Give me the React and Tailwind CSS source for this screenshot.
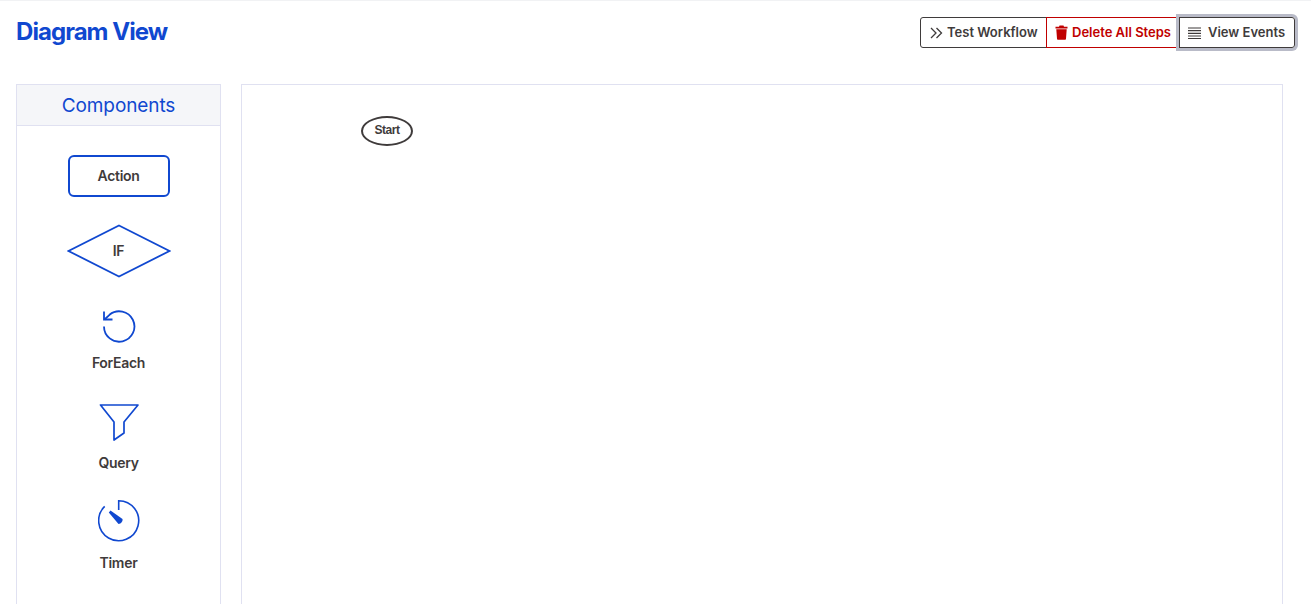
import React from "react";

const Label = ({ children, className = "" }) => (
  <span className={`text-[14px] font-semibold tracking-[-0.3px] leading-5 text-[#3f3b3b] ${className}`}>{children}</span>
);

export default function App() {
  return (
    <div className="h-[604px] overflow-hidden bg-white border-t border-[#f1f2f4] font-['Inter',sans-serif]">
      <div className="flex items-start justify-between pl-4 pr-4 pt-4 h-[83px]">
        <h1 className="text-[24px] leading-[30px] font-bold tracking-[-0.95px] text-[#1048d0]">Diagram View</h1>
        <div className="flex h-[31px]">
          <button className="flex items-center gap-1 w-[127px] pl-[9px] border border-[#3f3b3b] rounded-l-[3px] text-[13px] font-semibold text-[#3f3b3b]">
            <svg width="13" height="12" viewBox="0 0 13 12" fill="none" stroke="#3f3b3b" strokeWidth="1.3"><path d="M1 1 6 6l-5 5M6.500 1l5 5-5 5" /></svg>
            Test Workflow
          </button>
          <button className="flex items-center gap-[4px] w-[134px] -ml-px pl-[8px] border border-[#c00000] text-[13px] font-semibold text-[#c00000]">
            <svg width="13" height="15" viewBox="0 0 13 15" fill="#c00000"><path d="M4.500 0.500h4L9 1.800h3.500v1.600H.5V1.800H4zM1.300 4.200h10.400l-.7 9.600c0 .5-.5 1-1 1H3c-.5 0-1-.5-1-1z" /></svg>
            Delete All Steps
          </button>
          <button className="relative flex items-center gap-[7px] w-[116px] -ml-px pl-[8px] border border-[#3f3b3b] rounded-r-[3px] shadow-[0_0_0_3px_#b9bbc8] text-[13px] font-semibold text-[#3f3b3b]">
            <svg width="13" height="12" viewBox="0 0 13 12" fill="none" stroke="#3f3b3b" strokeWidth="1.2"><path d="M0 1h13M0 3.700h13M0 6.300h13M0 9h13M0 11.500h13" /></svg>
            View Events
          </button>
        </div>
      </div>
      <div className="flex gap-5 pl-4 pr-7">
        <aside className="w-[205px] h-[540px] shrink-0 border border-[#e0e1f1]">
          <div className="h-[41px] pt-[3px] flex items-center justify-center bg-[#f5f6f9] border-b border-[#e0e1f1] text-[19px] tracking-[-0.1px] text-[#1048d0]">Components</div>
          <div className="flex flex-col items-center pt-[29px]">
            <div className="w-[102px] h-[42px] flex items-center justify-center border-2 border-[#1048d0] rounded-[6px]"><Label>Action</Label></div>
            <div className="relative mt-[27px] w-[104px] h-[54px] flex items-center justify-center">
              <svg className="absolute inset-0" width="104" height="54" viewBox="0 0 104 54" fill="none" stroke="#1048d0" strokeWidth="1.8"><path d="M52 1.500 102.500 27 52 52.500 1.500 27z" /></svg>
              <Label className="relative">IF</Label>
            </div>
            <svg className="mt-[29px]" width="36" height="38" viewBox="0 0 36 38" fill="none" stroke="#1048d0" strokeWidth="1.8"><path d="M3 19.500a15.200 15.200 0 1 0 5.500-11.700L3.500 12.500" /><path d="M3 4.500v8h8.500" /></svg>
            <Label className="mt-2">ForEach</Label>
            <svg className="mt-[30px]" width="40" height="38" viewBox="0 0 40 38" fill="none" stroke="#1048d0" strokeWidth="1.700" strokeLinejoin="round"><path d="M1.500 2H39L25 19v11l-10 7V19z" /></svg>
            <Label className="mt-3">Query</Label>
            <svg className="mt-[26px]" width="42" height="44" viewBox="0 0 42 44" fill="none" stroke="#1048d0" strokeWidth="1.600"><path d="M20.700 11V1.700a20 20 0 1 1-14 5.700" /><path d="M10.800 13.500 12.500 11.500 24.500 20c.5 2-1.500 5-4 5z" fill="#1048d0" stroke="none" /></svg>
            <Label className="mt-[10px]">Timer</Label>
          </div>
        </aside>
        <main className="relative flex-1 h-[540px] border border-[#e0e1f1]">
          <div className="absolute left-[119px] top-[31px] w-[52px] h-[30px] pb-[2px] flex items-center justify-center rounded-[50%] border-2 border-[#3f3b3b] font-['Liberation_Sans',sans-serif] text-[12px] font-bold tracking-[-0.5px] text-[#3f3b3b]">Start</div>
        </main>
      </div>
    </div>
  );
}
